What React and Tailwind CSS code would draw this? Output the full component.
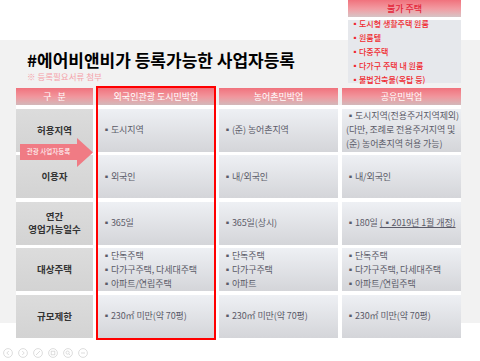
import { Fragment } from 'react'

const font = "font-['Noto_Sans_CJK_KR','Noto_Sans',sans-serif]"

const headers = ['구   분', '외국인관광 도시민박업', '농어촌민박업', '공유민박업']
const widths = ['w-[77px]', 'w-[116px] ml-[5px]', 'w-[119px] ml-[5px]', 'w-[119px] ml-[4px]']

const labels = [['허용지역'], ['이용자'], ['연간', '영업가능일수'], ['대상주택'], ['규모제한']]

const cols = [
  [
    ['▪도시지역'],
    ['▪외국인'],
    ['▪365일'],
    ['▪단독주택', '▪다가구주택, 다세대주택', '▪아파트/연립주택'],
    ['▪230㎡ 미만(약 70평)'],
  ],
  [
    ['▪(준) 농어촌지역'],
    ['▪내/외국인'],
    ['▪365일(상시)'],
    ['▪단독주택', '▪다가구주택', '▪아파트'],
    ['▪230㎡ 미만(약 70평)'],
  ],
  [
    ['▪도시지역(전용주거지역제외)', '(다만, 조례로 전용주거지역 및', '(준) 농어촌지역 허용 가능)'],
    ['▪내/외국인'],
    ['180'],
    ['▪단독주택', '▪다가구주택, 다세대주택', '▪아파트/연립주택'],
    ['▪230㎡ 미만(약 70평)'],
  ],
]

const banned = ['도시형 생활주택 원룸', '원룸텔', '다중주택', '다가구 주택 내 원룸', '불법건축물(옥탑 등)']

function Cell({ lines }) {
  return (
    <div className="h-[43px] flex flex-col justify-center pl-[4px] bg-linear-to-b from-[#eef0f4] to-[#d4d5d9] text-[9px] leading-[14px] tracking-[-0.1px] text-[#5b5b68] whitespace-nowrap overflow-hidden">
      {lines[0] === '180' ? (
        <div>
          ▪180일 <span className="underline">(▪2019년 1월 개정)</span>
        </div>
      ) : (
        lines.map(l => <div key={l}>{l}</div>)
      )}
    </div>
  )
}

function NavIcon({ children }) {
  return (
    <svg width="10" height="10" viewBox="0 0 10 10" fill="none" stroke="#d9d9d9" strokeWidth="0.9">
      <circle cx="5" cy="5" r="4.4" />
      {children}
    </svg>
  )
}

export default function App() {
  return (
    <div className={`relative w-[480px] h-[361px] bg-white overflow-hidden ${font}`}>
      <div className="mt-[40px] h-[283px] bg-[#f2f2f2] pt-[11px] pl-[16px]">
        <h1 className="ml-[11px] text-[17px] leading-[18px] font-bold text-black">
          #에어비앤비가 등록가능한 사업자등록
        </h1>
        <p className="ml-[11px] mt-[3px] text-[8.5px] leading-[9px] text-[#f4a2aa]">※ 등록필요서류 첨부</p>

        <div className="relative mt-[5px] pt-[2px] w-[445px]">
          <div className="flex">
            {headers.map((h, i) => (
              <div
                key={h}
                className={`${widths[i]} h-[17px] flex items-center justify-center bg-linear-to-b from-[#f0727d] via-[#f1959c] to-[#d2b8ba] text-white text-[9px] whitespace-pre`}
              >
                {h}
              </div>
            ))}
          </div>
          <div className="flex bg-white pt-[3.6px]">
            <div className={`${widths[0]} flex flex-col gap-[3.6px]`}>
              {labels.map(l => (
                <div
                  key={l[0]}
                  className="h-[43px] flex flex-col items-center justify-center bg-linear-to-b from-[#dcdcdc] to-[#d3d3d3] text-[9.5px] leading-[13px] font-bold text-[#333]"
                >
                  {l.map(t => (
                    <div key={t}>{t}</div>
                  ))}
                </div>
              ))}
            </div>
            {cols.map((c, i) => (
              <div key={i} className={`${widths[i + 1]} flex flex-col gap-[3.6px]`}>
                {c.map((lines, j) => (
                  <Cell key={j} lines={lines} />
                ))}
              </div>
            ))}
          </div>

          <div className="absolute left-[80px] top-0 w-[120px] h-[254px] border-2 border-[#ff0000] pointer-events-none" />

          <div className="absolute left-[4px] top-[52px] w-[73px] h-[29px]">
            <svg width="73" height="29" viewBox="0 0 73 29" className="absolute inset-0">
              <polygon points="0,6 57,6 57,0 73,14.5 57,29 57,22 0,22" fill="#f07b84" />
            </svg>
            <div className="absolute left-0 top-[6px] w-[57px] h-[16px] flex items-center justify-center text-white text-[6.5px] whitespace-nowrap">
              관광 사업자등록
            </div>
          </div>
        </div>
      </div>

      <div className="flex gap-[5px] ml-[3px] mt-[25px]">
        <NavIcon><path d="M5.8 3 L3.8 5 L5.8 7" /></NavIcon>
        <NavIcon><path d="M4.2 3 L6.2 5 L4.2 7" /></NavIcon>
        <NavIcon><path d="M3 7 L7 3" /></NavIcon>
        <NavIcon><rect x="3.2" y="3.2" width="3.6" height="3.6" /></NavIcon>
        <NavIcon><circle cx="4.6" cy="4.6" r="1.6" /><path d="M5.8 5.8 L7.2 7.2" /></NavIcon>
        <NavIcon><path d="M3 5 L7 5" /></NavIcon>
      </div>

      <div className="absolute left-[348px] top-0 w-[113px] flex flex-col">
        <div className="h-[17px] flex items-center justify-center bg-linear-to-b from-[#f0727d] via-[#f29aa1] to-[#d6c4c6] text-[#e3263a] text-[9px] font-medium">
          불가 주택
        </div>
        <div className="mt-[3px] h-[63px] bg-[#e6e8ec]">
          <ul className="-mt-[3px] pl-[3px] text-[8px] leading-[14px] font-medium text-[#f0282f] whitespace-nowrap">
            {banned.map(b => (
              <li key={b}>▪{b}</li>
            ))}
          </ul>
        </div>
      </div>
    </div>
  )
}
